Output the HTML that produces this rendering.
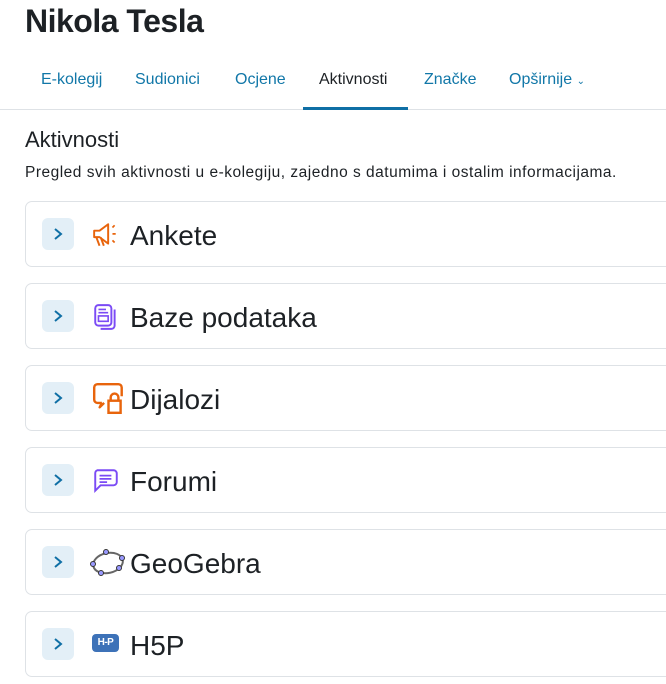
<!DOCTYPE html>
<html><head><meta charset="utf-8">
<style>
*{margin:0;padding:0;box-sizing:border-box}
body{width:666px;height:684px;overflow:hidden;background:#fff;font-family:"Liberation Sans",sans-serif;color:#1d2125;position:relative}
h1{position:absolute;left:25px;top:3px;font-size:32px;font-weight:600;letter-spacing:-0.5px}
.nav{position:absolute;left:0;top:60px;width:666px;height:50px;border-bottom:1px solid #dee2e6}
.nav a{position:absolute;top:11px;font-size:16px;color:#1177a8;text-decoration:none}
.nav .act{color:#1d2125}
.ul{position:absolute;left:303px;top:47px;width:105px;height:3px;background:#0f6fa5}
h2{position:absolute;left:25px;top:127px;font-size:22px;font-weight:400}
p.d{position:absolute;left:25px;top:164px;font-size:15.5px;letter-spacing:0.5px;white-space:nowrap}
.card{position:absolute;left:25px;width:660px;height:66px;border:1px solid #dee2e6;border-radius:7px}
.btn{position:absolute;left:16px;top:16px;width:32px;height:32px;background:#e3eff7;border-radius:6px}
.btn svg{position:absolute;left:10px;top:9px}
.ic{position:absolute;left:66px;top:19px;width:28px;height:28px}
.t{position:absolute;left:104px;top:18px;font-size:28px;color:#1d2125}
</style></head><body>
<h1>Nikola Tesla</h1>
<div class="nav">
<a style="left:41px">E-kolegij</a>
<a style="left:135px">Sudionici</a>
<a style="left:235px">Ocjene</a>
<a class="act" style="left:319px">Aktivnosti</a>
<a style="left:424px">Značke</a>
<a style="left:509px">Opširnije <span style="font-size:10px">&#8964;</span></a>
<div class="ul"></div>
</div>
<h2>Aktivnosti</h2>
<p class="d">Pregled svih aktivnosti u e-kolegiju, zajedno s datumima i ostalim informacijama.</p>

<div class="card" style="top:201px"><div class="btn"><svg width="12" height="14"><path d="M3 2l6 5-6 5" stroke="#0f6fa5" stroke-width="2" fill="none"/></svg></div>
<svg class="ic" viewBox="0 0 26 26"><path d="M2 9h5l8-6v18l-8-6H2z M4 15l3 8 M8 15l3 8" stroke="#e8640c" stroke-width="1.8" fill="none" stroke-linejoin="round"/><path d="M19 6l2-2M19 12h3M19 18l2 2" stroke="#e8640c" stroke-width="1.6"/></svg>
<span class="t">Ankete</span></div>

<div class="card" style="top:283px"><div class="btn"><svg width="12" height="14"><path d="M3 2l6 5-6 5" stroke="#0f6fa5" stroke-width="2" fill="none"/></svg></div>
<svg class="ic" viewBox="0 0 26 26"><rect x="3" y="2" width="15" height="19" rx="3" stroke="#7b4bf5" stroke-width="1.8" fill="none"/><path d="M21 6v15a3 3 0 0 1-3 3H8" stroke="#7b4bf5" stroke-width="1.8" fill="none"/><path d="M6 6h7M6 9h9" stroke="#7b4bf5" stroke-width="1.5"/><rect x="6" y="12" width="9" height="5" stroke="#7b4bf5" stroke-width="1.5" fill="none"/></svg>
<span class="t">Baze podataka</span></div>

<div class="card" style="top:365px"><div class="btn"><svg width="12" height="14"><path d="M3 2l6 5-6 5" stroke="#0f6fa5" stroke-width="2" fill="none"/></svg></div>
<svg class="ic" viewBox="0 0 30 30" style="left:66px;top:16px;width:33px;height:33px"><path d="M9 19H5a3 3 0 0 1-3-3V5a3 3 0 0 1 3-3h19a3 3 0 0 1 3 3v8 M9 19l-2 4 4-4" stroke="#e8640c" stroke-width="2.2" fill="none" stroke-linejoin="round"/><rect x="15" y="17" width="11" height="11" fill="none" stroke="#e8640c" stroke-width="2.2"/><path d="M17 17v-3a3.5 3.5 0 0 1 7 0v3" stroke="#e8640c" stroke-width="2.2" fill="none"/></svg>
<span class="t">Dijalozi</span></div>

<div class="card" style="top:447px"><div class="btn"><svg width="12" height="14"><path d="M3 2l6 5-6 5" stroke="#0f6fa5" stroke-width="2" fill="none"/></svg></div>
<svg class="ic" viewBox="0 0 26 26"><path d="M5 3h15a3 3 0 0 1 3 3v8a3 3 0 0 1-3 3H8l-5 5V6a3 3 0 0 1 2-3z" stroke="#7b4bf5" stroke-width="1.8" fill="none"/><path d="M7 8h11M7 11h11M7 14h7" stroke="#7b4bf5" stroke-width="1.6"/></svg>
<span class="t">Forumi</span></div>

<div class="card" style="top:529px"><div class="btn"><svg width="12" height="14"><path d="M3 2l6 5-6 5" stroke="#0f6fa5" stroke-width="2" fill="none"/></svg></div>
<svg viewBox="0 0 36 30" style="position:absolute;left:64px;top:18px;width:36px;height:30px"><ellipse cx="18" cy="15" rx="15" ry="10" transform="rotate(-12 18 15)" stroke="#666" stroke-width="2" fill="none"/><g fill="#9999ff" stroke="#333" stroke-width="1"><circle cx="16" cy="4" r="2.5"/><circle cx="32" cy="10" r="2.5"/><circle cx="29" cy="20" r="2.5"/><circle cx="11" cy="25" r="2.5"/><circle cx="3" cy="16" r="2.5"/></g></svg>
<span class="t" style="left:104px">GeoGebra</span></div>

<div class="card" style="top:611px"><div class="btn"><svg width="12" height="14"><path d="M3 2l6 5-6 5" stroke="#0f6fa5" stroke-width="2" fill="none"/></svg></div>
<div style="position:absolute;left:66px;top:22px;width:27px;height:18px;background:#3d72b8;border-radius:4px;color:#fff;font-size:10px;font-weight:700;text-align:center;line-height:18px;letter-spacing:-0.5px">H-P</div>
<span class="t">H5P</span></div>
</body></html>
